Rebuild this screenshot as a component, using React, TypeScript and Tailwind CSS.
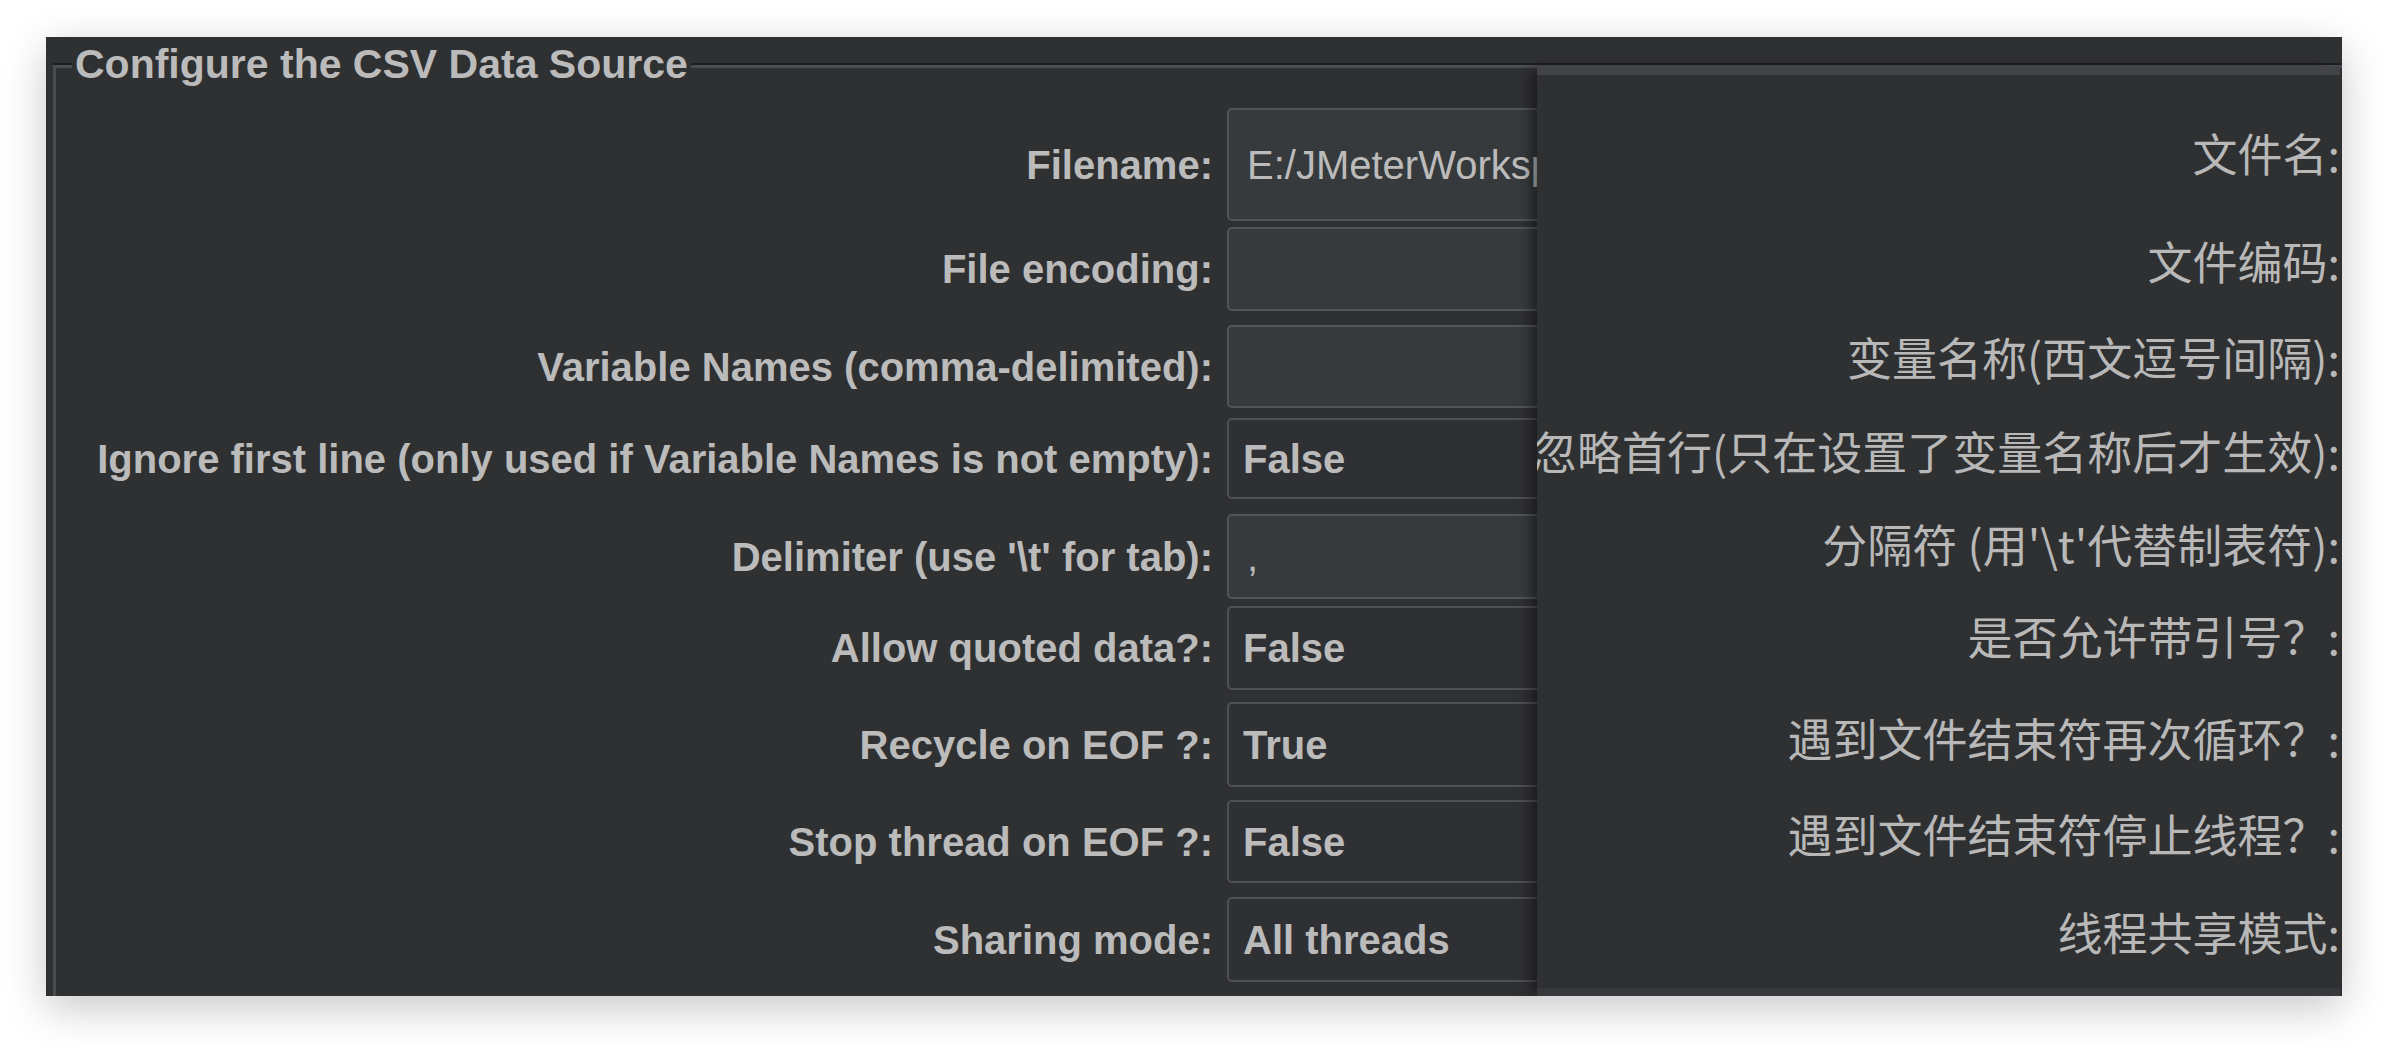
import React from "react";

interface FieldRow {
  label: string;
  value: string;
  combo?: boolean;
  box: string;
}

interface ZhRow {
  text: string;
  cls: string;
}

const rows: FieldRow[] = [
  { label: "Filename:", value: "E:/JMeterWorkspace/data.csv", box: "h-[113px]" },
  { label: "File encoding:", value: "", box: "mt-[6px] h-[84px]" },
  { label: "Variable Names (comma-delimited):", value: "", box: "mt-[14px] h-[83px]" },
  {
    label: "Ignore first line (only used if Variable Names is not empty):",
    value: "False",
    combo: true,
    box: "mt-[10px] h-[81px]",
  },
  { label: "Delimiter (use '\\t' for tab):", value: ",", box: "mt-[15px] h-[85px]" },
  { label: "Allow quoted data?:", value: "False", combo: true, box: "mt-[7px] h-[84px]" },
  { label: "Recycle on EOF ?:", value: "True", combo: true, box: "mt-[12px] h-[85px]" },
  { label: "Stop thread on EOF ?:", value: "False", combo: true, box: "mt-[13px] h-[83px]" },
  { label: "Sharing mode:", value: "All threads", combo: true, box: "mt-[14px] h-[85px]" },
];

const zhRows: ZhRow[] = [
  { text: "文件名:", cls: "mt-[48px]" },
  { text: "文件编码:", cls: "mt-[48px]" },
  { text: "变量名称(西文逗号间隔):", cls: "mt-[36px]" },
  { text: "忽略首行(只在设置了变量名称后才生效):", cls: "mt-[34px]" },
  { text: "分隔符 (用'\\t'代替制表符):", cls: "mt-[33px]" },
  { text: "是否允许带引号？:", cls: "mt-[32px]" },
  { text: "遇到文件结束符再次循环？:", cls: "mt-[42px]" },
  { text: "遇到文件结束符停止线程？:", cls: "mt-[36px]" },
  { text: "线程共享模式:", cls: "mt-[38px]" },
];

const Field = ({ row }: { row: FieldRow }) => (
  <div className={`flex items-center ${row.box}`}>
    <div className="w-[1157px] shrink-0 whitespace-nowrap text-right font-bold">
      {row.label}
    </div>
    <div
      className={
        row.combo
          ? "ml-[14px] flex h-full w-[1100px] shrink-0 items-center rounded-[5px] border-2 border-[#4e5053] bg-[#2f3033] px-[14px] font-bold"
          : "ml-[14px] flex h-full w-[1100px] shrink-0 items-center rounded-[5px] border-2 border-[#525457] bg-[#373a3c] px-[18px] font-normal"
      }
    >
      {row.value}
    </div>
  </div>
);

export default function App() {
  return (
    <div className="min-h-screen bg-white pl-[46px] pt-[37px] font-['Liberation_Sans',Arial,sans-serif] text-[40px] leading-[46px] text-[#bbbbbb]">
      <div className="relative h-[959px] w-[2296px] overflow-hidden bg-[#2f3032] shadow-[0_12px_40px_rgba(0,0,0,0.22)]">
        {/* group box */}
        <div className="relative ml-[7px] mt-[28px] h-[960px] border-l-[3px] border-t-[3px] border-[#4a4c4f] pt-[40px] shadow-[0_-2px_0_#1e1f21]">
          <span className="absolute left-[16px] top-[-27px] bg-[#2f3032] px-[3px] text-[41px] font-bold">
            Configure the CSV Data Source
          </span>
          <div className="flex flex-col">
            {rows.map((row) => (
              <Field key={row.label} row={row} />
            ))}
          </div>
        </div>

        {/* translated labels panel laid over the form */}
        <div className="absolute bottom-0 left-[1491px] right-[2px] top-[29px] flex flex-col overflow-hidden border-b-[8px] border-t-[9px] border-b-[#36383b] border-t-[#424447] bg-[#2f3032] shadow-[-10px_0_12px_-4px_rgba(0,0,0,0.45)]">
          {zhRows.map((r) => (
            <div
              key={r.text}
              className={`flex h-[60px] shrink-0 items-center justify-end whitespace-nowrap font-['Noto_Sans_CJK_SC',sans-serif] text-[45px] leading-[60px] text-[#b8b8b8] ${r.cls}`}
            >
              {r.text}
            </div>
          ))}
        </div>
      </div>
    </div>
  );
}
